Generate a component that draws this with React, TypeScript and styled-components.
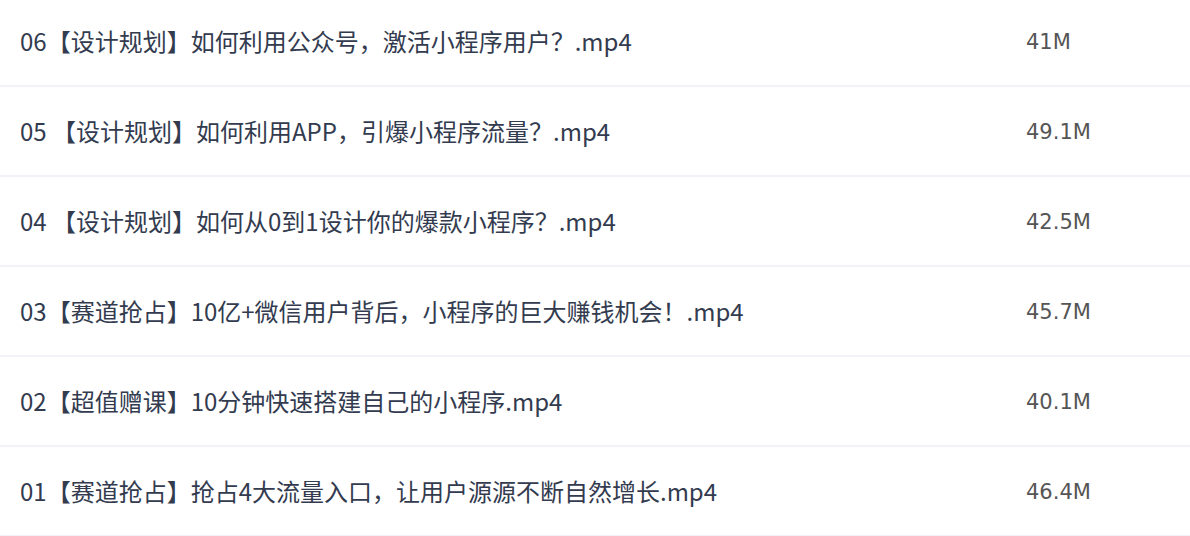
import React from "react";
import styled, { createGlobalStyle } from "styled-components";

const GlobalStyle = createGlobalStyle`
  html, body {
    margin: 0;
    padding: 0;
    background: #ffffff;
  }
  body {
    font-family: "Noto Sans CJK SC", "Noto Sans", sans-serif;
    overflow: hidden;
  }
`;

const List = styled.ul`
  list-style: none;
  margin: -3px 0 0 0;
  padding: 0;
  width: 1190px;
`;

const Row = styled.li`
  display: flex;
  align-items: center;
  height: 88px;
  border-bottom: 2px solid #f1f3f8;
  padding-left: 20px;
  box-sizing: content-box;
`;

const Title = styled.span`
  flex: 0 0 1006px;
  font-size: 24px;
  line-height: 36px;
  color: #333b4f;
  white-space: nowrap;
`;

const Size = styled.span`
  font-family: "DejaVu Sans", "Noto Sans", sans-serif;
  font-size: 21px;
  line-height: 36px;
  color: #555555;
  padding-top: 2px;
`;

const files = [
  { name: "06【设计规划】如何利用公众号，激活小程序用户？.mp4", size: "41M" },
  { name: "05 【设计规划】如何利用APP，引爆小程序流量？.mp4", size: "49.1M" },
  { name: "04 【设计规划】如何从0到1设计你的爆款小程序？.mp4", size: "42.5M" },
  { name: "03【赛道抢占】10亿+微信用户背后，小程序的巨大赚钱机会！.mp4", size: "45.7M" },
  { name: "02【超值赠课】10分钟快速搭建自己的小程序.mp4", size: "40.1M" },
  { name: "01【赛道抢占】抢占4大流量入口，让用户源源不断自然增长.mp4", size: "46.4M" },
];

export default function App() {
  return (
    <>
      <GlobalStyle />
      <List>
        {files.map((f) => (
          <Row key={f.name}>
            <Title>{f.name}</Title>
            <Size>{f.size}</Size>
          </Row>
        ))}
      </List>
    </>
  );
}
